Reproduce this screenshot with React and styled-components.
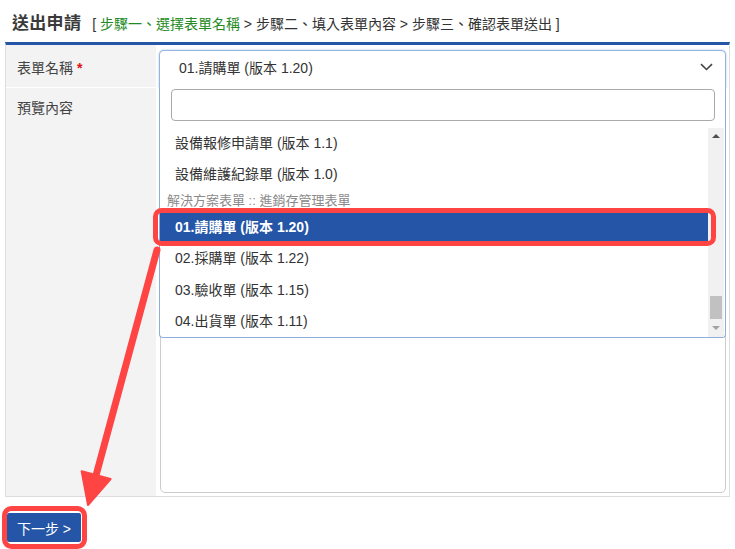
import React from 'react'
import styled, { createGlobalStyle } from 'styled-components'

const GlobalStyle = createGlobalStyle`
   html, body {
      margin: 0;
      padding: 0;
      background: #fff;
   }
   body {
      font-family: "Liberation Sans", "Noto Sans CJK TC", sans-serif;
      color: #333;
   }
`

const beforeItems = ['設備報修申請單 (版本 1.1)', '設備維護紀錄單 (版本 1.0)']
const groupItems = [
   { label: '01.請購單 (版本 1.20)', selected: true },
   { label: '02.採購單 (版本 1.22)' },
   { label: '03.驗收單 (版本 1.15)' },
   { label: '04.出貨單 (版本 1.11)' }
]

// arrow geometry: tail near the selected option, tip at the next button
const tail = { x: 157, y: 250 }
const tip = { x: 88, y: 505 }

const arrowHead = () => {
   const dx = tip.x - tail.x
   const dy = tip.y - tail.y
   const len = Math.sqrt(dx * dx + dy * dy)
   const ux = dx / len
   const uy = dy / len
   const bx = tip.x - ux * 31
   const by = tip.y - uy * 31
   const px = -uy
   const py = ux
   const w = 15
   return {
      base: { x: bx, y: by },
      points: `${tip.x},${tip.y} ${bx + px * w},${by + py * w} ${bx - px * w},${by - py * w}`
   }
}

const App = () => {
   const head = arrowHead()
   return (
      <Page>
         <GlobalStyle />
         <Header>
            <Title>送出申請</Title>
            <Steps>
               [ <Current>步驟一、選擇表單名稱</Current> &gt; 步驟二、填入表單內容 &gt; 步驟三、確認表單送出 ]
            </Steps>
         </Header>
         <FormTable>
            <Label $first>
               表單名稱 <Required>*</Required>
            </Label>
            <Cell $first>
               <SelectWrap>
                  <Select>
                     <span>01.請購單 (版本 1.20)</span>
                     <svg width="13" height="8" viewBox="0 0 13 8">
                        <path d="M1 1.2 L6.5 6.5 L12 1.2" fill="none" stroke="#444" strokeWidth="1.6" />
                     </svg>
                  </Select>
                  <Dropdown>
                     <Search />
                     <ListArea>
                        <Options>
                           {beforeItems.map(item => (
                              <Option key={item}>{item}</Option>
                           ))}
                           <Group>解決方案表單 :: 進銷存管理表單</Group>
                           {groupItems.map(item => (
                              <Option key={item.label} $selected={item.selected}>
                                 {item.label}
                              </Option>
                           ))}
                        </Options>
                        <Scrollbar>
                           <ScrollArrow $up />
                           <Track>
                              <Thumb />
                           </Track>
                           <ScrollArrow />
                        </Scrollbar>
                     </ListArea>
                  </Dropdown>
               </SelectWrap>
            </Cell>
            <Label>預覽內容</Label>
            <Cell>
               <Preview />
            </Cell>
         </FormTable>
         <Footer>
            <NextButton>下一步 &gt;</NextButton>
         </Footer>
         <Annotations width="735" height="549" viewBox="0 0 735 549">
            <rect x="155.5" y="210.5" width="558" height="33" rx="6" fill="none" stroke="#ff4444" strokeWidth="5" />
            <rect x="4.5" y="508.5" width="80" height="38" rx="7" fill="none" stroke="#ff4444" strokeWidth="5" />
            <line x1={tail.x} y1={tail.y} x2={head.base.x} y2={head.base.y} stroke="#ff4444" strokeWidth="7" strokeLinecap="round" />
            <polygon points={head.points} fill="#ff4444" stroke="#ff4444" strokeWidth="2" strokeLinejoin="round" />
         </Annotations>
      </Page>
   )
}

export default App

const Page = styled.div`
   position: relative;
   width: 735px;
   height: 549px;
   overflow: hidden;
`

const Header = styled.div`
   display: flex;
   align-items: baseline;
   height: 42px;
   padding: 9px 0 0 12px;
   box-sizing: border-box;
   white-space: nowrap;
`

const Title = styled.h1`
   margin: 0;
   font-size: 17px;
   font-weight: bold;
   color: #3a3a3a;
   letter-spacing: 0.3px;
`

const Steps = styled.span`
   margin-left: 11px;
   font-size: 14px;
   color: #333;
`

const Current = styled.span`
   color: #238a23;
`

const FormTable = styled.div`
   display: grid;
   grid-template-columns: 150px 1fr;
   grid-template-rows: 43px 408px;
   margin: 0 5px;
   border-top: 3px solid #2455a6;
   border-left: 1px solid #ddd;
   border-right: 1px solid #ddd;
   border-bottom: 1px solid #ddd;
`

const Label = styled.div`
   background: #f3f3f3;
   font-size: 14px;
   color: #444;
   padding: ${p => (p.$first ? '12px 0 0 11px' : '9px 0 0 11px')};
   border-bottom: ${p => (p.$first ? '1px solid #fff' : 'none')};
`

const Required = styled.span`
   color: #e01010;
   font-weight: bold;
`

const Cell = styled.div`
   position: relative;
   padding: ${p => (p.$first ? '5px 3px 0 3px' : '4px 3px 3px 4px')};
   box-sizing: border-box;
   z-index: ${p => (p.$first ? 2 : 1)};
`

const SelectWrap = styled.div`
   position: relative;
`

const Select = styled.div`
   display: flex;
   align-items: center;
   justify-content: space-between;
   height: 38px;
   padding: 0 12px 6px 19px;
   box-sizing: border-box;
   border: 1px solid #97b5e2;
   border-bottom: none;
   border-radius: 5px 5px 0 0;
   box-shadow: 0 0 2px rgba(90, 135, 205, 0.6);
   font-size: 14px;
   color: #333;
   background: #fff;
`

const Dropdown = styled.div`
   position: absolute;
   top: 38px;
   left: 0;
   right: 0;
   height: 250px;
   background: #fff;
   border: 1px solid #8eaedb;
   border-top: none;
   border-radius: 0 0 4px 4px;
   box-sizing: border-box;
   display: flex;
   flex-direction: column;
`

const Search = styled.div`
   height: 32px;
   margin: 1px 10px 0 11px;
   border: 1px solid #aaa;
   border-radius: 4px;
   box-sizing: border-box;
`

const ListArea = styled.div`
   display: flex;
   margin-top: 5px;
   height: 211px;
`

const Options = styled.div`
   flex: 1;
   overflow: hidden;
`

const Option = styled.div`
   height: 31.5px;
   display: flex;
   align-items: center;
   padding-left: 15px;
   font-size: 14px;
   color: ${p => (p.$selected ? '#fff' : '#333')};
   font-weight: ${p => (p.$selected ? 'bold' : 'normal')};
   background: ${p => (p.$selected ? '#2455a6' : 'transparent')};
`

const Group = styled.div`
   height: 21px;
   display: flex;
   align-items: center;
   padding-left: 7px;
   font-size: 13px;
   color: #8a8a8a;
`

const Scrollbar = styled.div`
   width: 16px;
   margin: 2px 1px 0 0;
   background: #f1f1f1;
   display: flex;
   flex-direction: column;
   align-items: center;
`

const ScrollArrow = styled.div`
   height: 17px;
   width: 16px;
   position: relative;
   &::after {
      content: '';
      position: absolute;
      left: 4px;
      top: 6px;
      border-left: 4px solid transparent;
      border-right: 4px solid transparent;
      ${p => (p.$up ? 'border-bottom: 4px solid #505050;' : 'border-top: 4px solid #a3a3a3;')}
   }
`

const Track = styled.div`
   flex: 1;
   width: 100%;
   display: flex;
   flex-direction: column;
   justify-content: flex-end;
   align-items: center;
   padding-bottom: 1px;
`

const Thumb = styled.div`
   width: 12px;
   height: 23px;
   background: #c1c1c1;
`

const Preview = styled.div`
   height: 100%;
   border: 1px solid #ccc;
   border-radius: 5px;
   box-sizing: border-box;
`

const Footer = styled.div`
   display: flex;
   padding: 16px 0 0 7px;
`

const NextButton = styled.button`
   height: 29px;
   width: 74px;
   padding: 0;
   border: none;
   border-radius: 2px;
   background: #2455a6;
   color: #fff;
   font-family: "Liberation Sans", "Noto Sans CJK TC", sans-serif;
   font-size: 14px;
   cursor: pointer;
`

const Annotations = styled.svg`
   position: absolute;
   top: 0;
   left: 0;
   pointer-events: none;
   z-index: 5;
`
